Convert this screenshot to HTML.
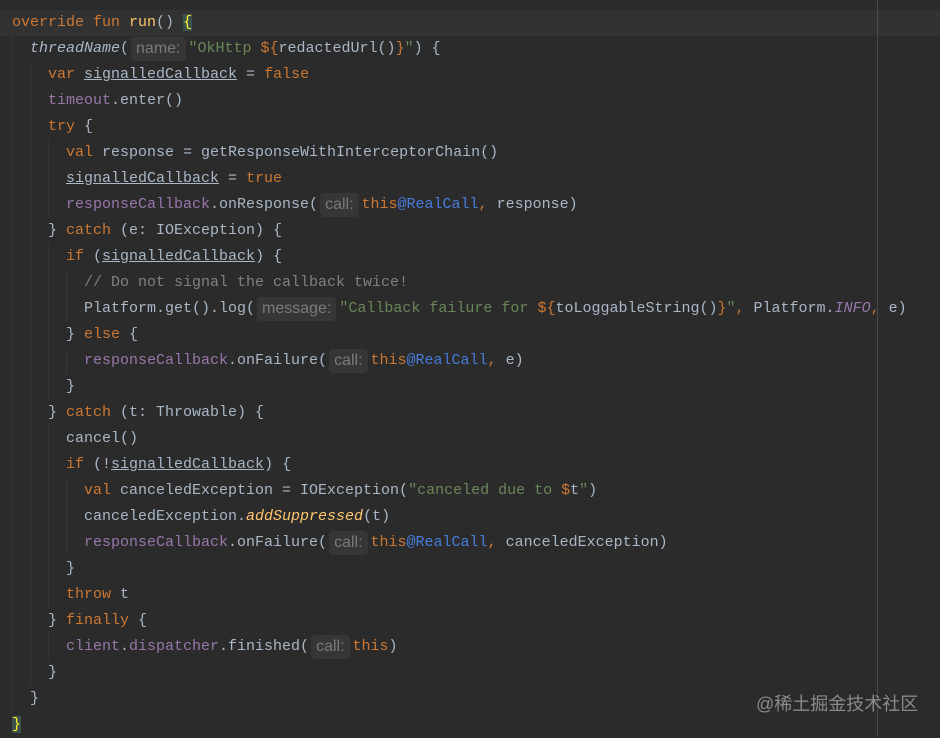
<!DOCTYPE html><html><head><meta charset="utf-8"><style>
body{margin:0;width:940px;height:736px;background:#2b2b2b;overflow:hidden;position:relative;font-family:"Liberation Mono",monospace;font-size:15px;color:#a9b7c6}
.l{position:absolute;left:0;height:26px;line-height:26px;white-space:pre}
.k{color:#cc7832}.s{color:#6a8759}.p{color:#9876aa}.c{color:#808080}.b{color:#467cda}.y{color:#ffc66d;font-style:italic}.i{font-style:italic}.u{text-decoration:underline}
.h{display:inline-block;font-family:"Liberation Sans",sans-serif;font-size:16px;color:#7a7a7a;background:#363636;border-radius:4px;padding:0 5px;margin:0 3px 0 2px;line-height:24px;vertical-align:top;margin-top:1px}
.g{position:absolute;width:1px;background:#363636}
</style></head><body>
<div style="position:absolute;left:0;top:10px;width:940px;height:26px;background:#323232"></div>
<div style="position:absolute;left:877px;top:0;width:1px;height:736px;background:#4a4a4a"></div>
<div class="g" style="left:12px;top:36px;height:676px"></div>
<div class="g" style="left:30px;top:62px;height:624px"></div>
<div class="g" style="left:48px;top:140px;height:78px"></div>
<div class="g" style="left:48px;top:244px;height:156px"></div>
<div class="g" style="left:66px;top:270px;height:52px"></div>
<div class="g" style="left:66px;top:348px;height:26px"></div>
<div class="g" style="left:48px;top:426px;height:182px"></div>
<div class="g" style="left:66px;top:478px;height:78px"></div>
<div class="g" style="left:48px;top:634px;height:26px"></div>
<div class="l" style="top:10px;left:12px"><span class="k">override fun </span><span style="color:#ffc66d">run</span>() <span style="color:#ffef28;background:#3b514d">{</span></div>
<div class="l" style="top:36px;left:30px"><span class="i">threadName</span>(<span class="h">name:</span><span class="s">"OkHttp </span><span class="k">${</span>redactedUrl()<span class="k">}</span><span class="s">"</span>) {</div>
<div class="l" style="top:62px;left:48px"><span class="k">var </span><span class="u">signalledCallback</span> = <span class="k">false</span></div>
<div class="l" style="top:88px;left:48px"><span class="p">timeout</span>.enter()</div>
<div class="l" style="top:114px;left:48px"><span class="k">try </span>{</div>
<div class="l" style="top:140px;left:66px"><span class="k">val </span>response = getResponseWithInterceptorChain()</div>
<div class="l" style="top:166px;left:66px"><span class="u">signalledCallback</span> = <span class="k">true</span></div>
<div class="l" style="top:192px;left:66px"><span class="p">responseCallback</span>.onResponse(<span class="h">call:</span><span class="k">this</span><span class="b">@RealCall</span><span class="k">, </span>response)</div>
<div class="l" style="top:218px;left:48px">} <span class="k">catch </span>(e: IOException) {</div>
<div class="l" style="top:244px;left:66px"><span class="k">if </span>(<span class="u">signalledCallback</span>) {</div>
<div class="l" style="top:270px;left:84px"><span class="c">// Do not signal the callback twice!</span></div>
<div class="l" style="top:296px;left:84px">Platform.get().log(<span class="h">message:</span><span class="s">"Callback failure for </span><span class="k">${</span>toLoggableString()<span class="k">}</span><span class="s">"</span><span class="k">, </span>Platform.<span class="p i">INFO</span><span class="k">, </span>e)</div>
<div class="l" style="top:322px;left:66px">} <span class="k">else </span>{</div>
<div class="l" style="top:348px;left:84px"><span class="p">responseCallback</span>.onFailure(<span class="h">call:</span><span class="k">this</span><span class="b">@RealCall</span><span class="k">, </span>e)</div>
<div class="l" style="top:374px;left:66px">}</div>
<div class="l" style="top:400px;left:48px">} <span class="k">catch </span>(t: Throwable) {</div>
<div class="l" style="top:426px;left:66px">cancel()</div>
<div class="l" style="top:452px;left:66px"><span class="k">if </span>(!<span class="u">signalledCallback</span>) {</div>
<div class="l" style="top:478px;left:84px"><span class="k">val </span>canceledException = IOException(<span class="s">"canceled due to </span><span class="k">$</span>t<span class="s">"</span>)</div>
<div class="l" style="top:504px;left:84px">canceledException.<span class="y">addSuppressed</span>(t)</div>
<div class="l" style="top:530px;left:84px"><span class="p">responseCallback</span>.onFailure(<span class="h">call:</span><span class="k">this</span><span class="b">@RealCall</span><span class="k">, </span>canceledException)</div>
<div class="l" style="top:556px;left:66px">}</div>
<div class="l" style="top:582px;left:66px"><span class="k">throw </span>t</div>
<div class="l" style="top:608px;left:48px">} <span class="k">finally </span>{</div>
<div class="l" style="top:634px;left:66px"><span class="p">client</span>.<span class="p">dispatcher</span>.finished(<span class="h">call:</span><span class="k">this</span>)</div>
<div class="l" style="top:660px;left:48px">}</div>
<div class="l" style="top:686px;left:30px">}</div>
<div class="l" style="top:712px;left:12px"><span style="color:#ffef28;background:#3b514d">}</span></div>
<div style="position:absolute;left:756px;top:690px;font-family:'Liberation Sans','Noto Sans CJK SC',sans-serif;font-size:18px;color:#8a8a8a;white-space:nowrap">@稀土掘金技术社区</div>
</body></html>
